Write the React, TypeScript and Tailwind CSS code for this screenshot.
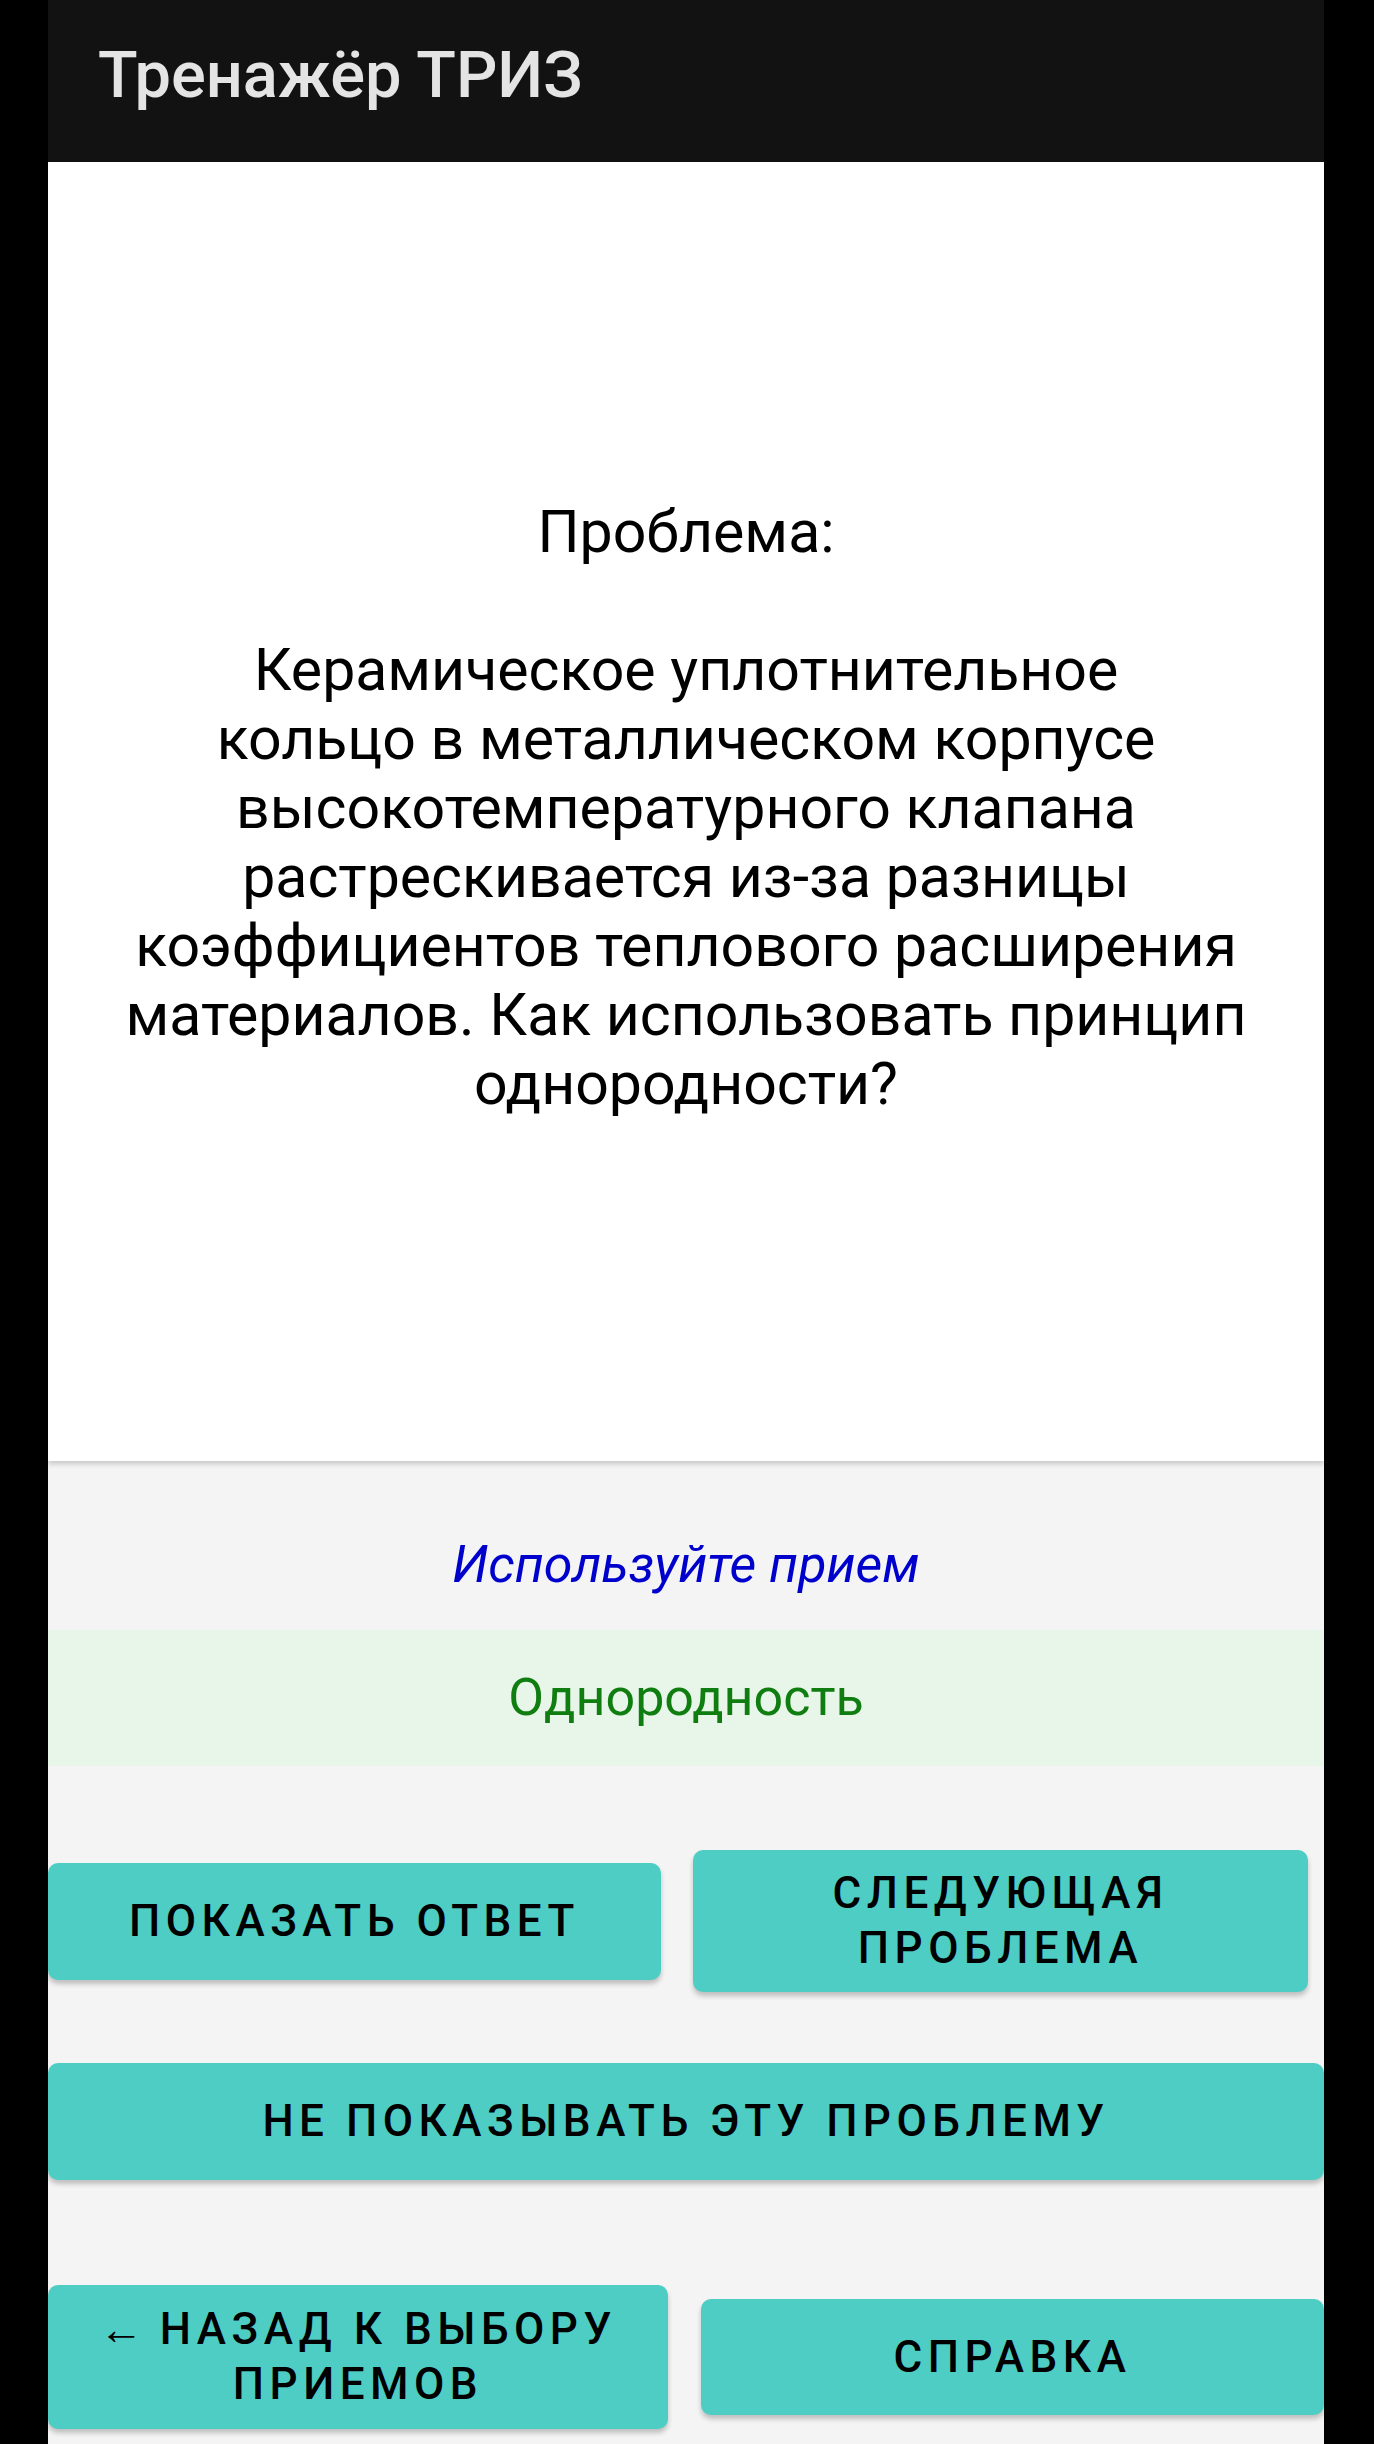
import React from "react";

const font = { fontFamily: "Roboto, 'Noto Sans', sans-serif" };

function Btn({ children, className }: { children: React.ReactNode; className: string }) {
  return (
    <div
      className={
        "flex flex-col items-center justify-center rounded-[10px] bg-[#4ecdc4] text-center text-[44px] font-medium uppercase tracking-[0.125em] text-black leading-[55px] shadow-[0_4px_5px_rgba(0,0,0,0.22)] " +
        className
      }
    >
      {children}
    </div>
  );
}

export default function App() {
  return (
    <div className="flex h-[2444px] w-[1374px] overflow-hidden bg-black" style={font}>
      <div className="w-[48px] shrink-0 bg-black" />
      <div className="flex w-[1276px] shrink-0 flex-col">
        <div className="h-[162px] shrink-0 bg-[#121212] pl-[50px] pt-[37px]">
          <div className="text-[65px] font-medium leading-[76px] text-[#e4e4e4]">Тренажёр ТРИЗ</div>
        </div>
        <div className="relative z-10 flex h-[1299px] shrink-0 items-center justify-center bg-white pb-[8px] shadow-[0_3px_5px_rgba(0,0,0,0.18)]">
          <p className="text-center text-[59px] leading-[69px] text-black">
            Проблема:
            <br />
            <br />
            Керамическое уплотнительное
            <br />
            кольцо в металлическом корпусе
            <br />
            высокотемпературного клапана
            <br />
            растрескивается из-за разницы
            <br />
            коэффициентов теплового расширения
            <br />
            материалов. Как использовать принцип
            <br />
            однородности?
          </p>
        </div>
        <div className="flex flex-1 flex-col bg-[#f4f4f4]">
          <div className="mt-[73px] text-center text-[52px] italic leading-[61px] text-[#0000cd]">
            Используйте прием
          </div>
          <div className="mt-[35px] flex h-[136px] items-center justify-center bg-[#e8f5e9] text-[52px] text-[#0f7d10]">
            Однородность
          </div>
          <div className="mt-[84px] flex h-[142px] items-center gap-[32px] pr-[16px]">
            <Btn className="h-[117px] w-[613px]">Показать ответ</Btn>
            <Btn className="h-[142px] w-[615px]">
              <span>Следующая</span>
              <span>проблема</span>
            </Btn>
          </div>
          <div className="mt-[71px]">
            <Btn className="h-[117px] w-[1276px]">Не показывать эту проблему</Btn>
          </div>
          <div className="mt-[105px] flex h-[144px] items-center gap-[33px]">
            <Btn className="h-[144px] w-[620px]">
              <span>
                <span className="font-normal tracking-normal">←</span> Назад к выбору
              </span>
              <span>приемов</span>
            </Btn>
            <Btn className="h-[116px] w-[623px]">Справка</Btn>
          </div>
        </div>
      </div>
      <div className="w-[50px] shrink-0 bg-black" />
    </div>
  );
}
